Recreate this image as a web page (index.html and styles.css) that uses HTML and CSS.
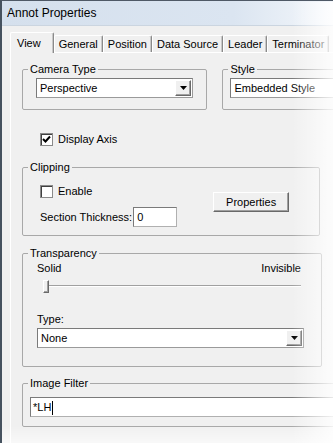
FILE: index.html
```html
<!DOCTYPE html>
<html>
<head>
  <title>Annot Properties</title>
  <link rel="stylesheet" href="styles.css">
</head>
<body>
  <div class="window">
    <div class="titlebar">Annot Properties</div>
    <div class="client">
      <div class="tabs">
        <div class="tab active">View</div>
        <div class="tab">General</div>
        <div class="tab">Position</div>
        <div class="tab">Data Source</div>
        <div class="tab">Leader</div>
        <div class="tab">Terminator</div>
      </div>
      <div class="page">
        <div class="group-row">
          <fieldset class="group camera">
            <legend>Camera Type</legend>
            <div class="group-body">
              <div class="combo camera-combo">
                <span class="combo-text">Perspective</span>
                <span class="combo-btn"><svg width="7" height="4" viewBox="0 0 7 4"><polygon points="0,0 7,0 3.5,4" fill="#000"/></svg></span>
              </div>
            </div>
          </fieldset>
          <fieldset class="group style">
            <legend>Style</legend>
            <div class="group-body">
              <div class="combo style-combo">
                <span class="combo-text">Embedded Style</span>
              </div>
            </div>
          </fieldset>
        </div>

        <label class="check display-axis">
          <span class="box"><svg width="11" height="11" viewBox="0 0 11 11"><polyline points="2,5 4.5,7.5 9,2.5" fill="none" stroke="#000" stroke-width="2"/></svg></span>
          Display Axis
        </label>

        <fieldset class="group clipping">
          <legend>Clipping</legend>
          <div class="group-body clip-body">
            <div class="clip-left">
              <label class="check"><span class="box"></span>Enable</label>
              <div class="thickness">
                <span>Section Thickness:</span>
                <span class="textbox thick-box">0</span>
              </div>
            </div>
            <div class="button">Properties</div>
          </div>
        </fieldset>

        <fieldset class="group transparency">
          <legend>Transparency</legend>
          <div class="group-body trans-body">
            <div class="scale-labels">
              <span>Solid</span>
              <span>Invisible</span>
            </div>
            <div class="slider"><span class="thumb"></span></div>
            <div class="type-label">Type:</div>
            <div class="combo">
              <span class="combo-text">None</span>
              <span class="combo-btn"><svg width="7" height="4" viewBox="0 0 7 4"><polygon points="0,0 7,0 3.5,4" fill="#000"/></svg></span>
            </div>
          </div>
        </fieldset>

        <fieldset class="group filter">
          <legend>Image Filter</legend>
          <div class="group-body filter-body">
            <div class="textbox filter-box">*LH<span class="caret"></span></div>
          </div>
        </fieldset>
      </div>
    </div>
  </div>
</body>
</html>
```

FILE: styles.css
```css
* {
  box-sizing: border-box;
}

body {
  margin: 0;
  width: 333px;
  height: 443px;
  overflow: hidden;
  background: #fff;
  font-family: 'Liberation Sans', Arial, sans-serif;
  font-size: 11px;
  color: #000;
}

.window {
  position: relative;
  width: 333px;
  height: 443px;
  overflow: hidden;
  background: #f0f0f0;
  border-top: 1px solid #4f5966;
  border-left: 2px solid #46525f;
}

/* soft white fade on the right and bottom edges of the capture */
.window::after {
  content: '';
  position: absolute;
  top: 1px;
  left: 0;
  right: 0;
  bottom: 0;
  pointer-events: none;
  background:
    linear-gradient(to right, rgba(255, 255, 255, 0) 290px, rgba(255, 255, 255, 0.88) 333px),
    linear-gradient(to bottom, rgba(255, 255, 255, 0) 424px, rgba(255, 255, 255, 0.65) 443px);
}

.titlebar {
  height: 25px;
  line-height: 25px;
  padding-left: 5px;
  font-size: 12px;
  background: linear-gradient(to right, #d5e0ed 0%, #dbe5f1 70%, #f4f7fb 100%);
  border-bottom: 1px solid #cbd5e0;
  white-space: nowrap;
}

.client {
  width: 360px;
  padding: 6px 0 0 8px;
}

.tabs {
  display: flex;
  align-items: flex-end;
  height: 20px;
}

.tab {
  height: 17px;
  line-height: 16px;
  padding: 0 4px;
  border-top: 1px solid #fff;
  border-left: 1px solid #fff;
  border-right: 1px solid #8a8a8a;
  border-radius: 2px 2px 0 0;
  box-shadow: inset -1px 0 #c8c8c8;
  white-space: nowrap;
}

.tab.active {
  position: relative;
  z-index: 1;
  height: 21px;
  line-height: 20px;
  margin-bottom: -1px;
  padding: 0 12px 0 6px;
  background: #f0f0f0;
}

.page {
  height: 420px;
  border-top: 1px solid #fff;
  border-left: 1px solid #fff;
  padding: 10px 0 0 11px;
}

.group-row {
  display: flex;
  gap: 15px;
}

.group {
  margin: 0;
  padding: 0;
  border: 1px solid #a8a8a8;
  border-radius: 2px;
  min-width: 0;
}

.group legend {
  margin-left: 5px;
  padding: 0 2px;
  line-height: 13px;
  white-space: nowrap;
}

.camera {
  width: 186px;
}

.camera .group-body {
  padding: 2px 13px 11px 13px;
}

.style {
  width: 140px;
}

.style .group-body {
  padding: 2px 0 11px 7px;
}

.style-combo {
  width: 150px;
}

.combo {
  display: flex;
  align-items: center;
  height: 20px;
  padding: 0 1px 0 3px;
  background: #fff;
  border: 1px solid #7a7a7a;
  border-right-color: #9a9a9a;
  border-bottom-color: #9a9a9a;
  white-space: nowrap;
}

.combo-text {
  flex: 1;
}

.combo-btn {
  display: flex;
  align-items: center;
  justify-content: center;
  width: 16px;
  height: 16px;
  background: #f0f0f0;
  border: 1px solid;
  border-color: #fff #696969 #696969 #fff;
  box-shadow: inset -1px -1px #a0a0a0;
}

.check {
  display: flex;
  align-items: center;
  gap: 5px;
  height: 13px;
  line-height: 13px;
}

.box {
  display: flex;
  align-items: center;
  justify-content: center;
  width: 13px;
  height: 13px;
  background: #fff;
  border: 1px solid #8a8a8a;
  box-shadow: inset 1px 1px #404040;
}

.display-axis {
  margin: 23px 0 0 18px;
}

.clipping {
  width: 298px;
  margin-top: 15px;
}

.clip-body {
  display: flex;
  gap: 36px;
  padding: 11px 0 8px 17px;
}

.thickness {
  display: flex;
  align-items: center;
  gap: 1px;
  margin-top: 9px;
}

.textbox {
  height: 20px;
  line-height: 18px;
  padding-left: 3px;
  background: #fff;
  border: 1px solid #7a7a7a;
  border-right-color: #b0b0b0;
  border-bottom-color: #b0b0b0;
  white-space: nowrap;
}

.thick-box {
  width: 44px;
}

.button {
  width: 76px;
  height: 20px;
  line-height: 18px;
  margin-top: 7px;
  text-align: center;
  background: #f0f0f0;
  border: 1px solid;
  border-color: #fff #696969 #696969 #fff;
  box-shadow: inset -1px -1px #a0a0a0;
}

.transparency {
  width: 300px;
  margin-top: 11px;
}

.trans-body {
  padding: 2px 17px 18px 14px;
}

.scale-labels {
  display: flex;
  justify-content: space-between;
  height: 13px;
  line-height: 13px;
  margin-right: 3px;
}

.slider {
  height: 13px;
  margin: 5px 3px 0 6px;
  background: linear-gradient(to bottom, transparent 5px, #a0a0a0 5px, #a0a0a0 6px, #fff 6px, #fff 7px, transparent 7px);
}

.thumb {
  display: block;
  width: 6px;
  height: 13px;
  background: #f0f0f0;
  border: 1px solid;
  border-color: #fff #696969 #696969 #fff;
  box-shadow: inset -1px -1px #a0a0a0;
}

.type-label {
  height: 13px;
  line-height: 13px;
  margin: 20px 0 2px;
}

.filter {
  width: 340px;
  margin-top: 10px;
}

.filter-body {
  padding: 7px 0 9px 7px;
}

.filter-box {
  width: 320px;
  padding-left: 2px;
}

.caret {
  display: inline-block;
  width: 1px;
  height: 14px;
  margin-left: 1px;
  vertical-align: middle;
  background: #000;
}
```
